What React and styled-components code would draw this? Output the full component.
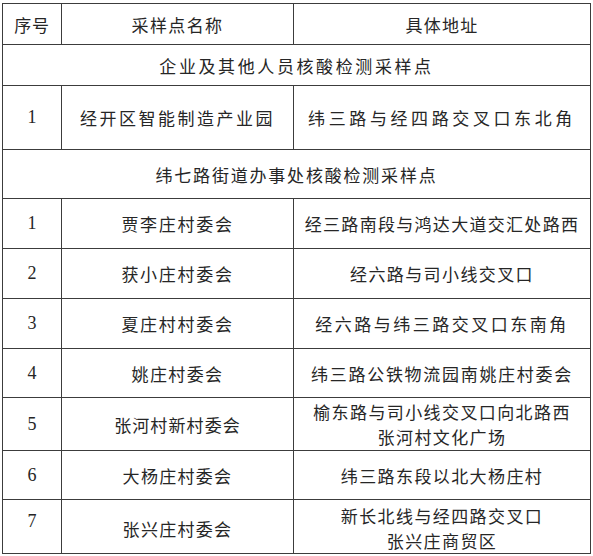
import React from 'react';
import styled, { createGlobalStyle } from 'styled-components';

const GlobalStyle = createGlobalStyle`
  html, body {
    margin: 0;
    padding: 0;
    background: #ffffff;
  }
  body {
    font-family: "Noto Sans CJK SC", "Liberation Serif", serif;
    color: #222;
  }
`;

const Page = styled.div`
  width: 593px;
  height: 556px;
  padding: 3px 0 0 2px;
  box-sizing: border-box;
  background: #fff;
  overflow: hidden;
`;

const Table = styled.table`
  width: 588px;
  border-collapse: collapse;
  table-layout: fixed;
  border: 1.5px solid #2e2e2e;
`;

const Row = styled.tr`
  height: ${({ h }) => h}px;
`;

const Cell = styled.td`
  border: 1.5px solid #3c3c3c;
  padding: ${({ pad }) => pad || '0'};
  text-align: center;
  vertical-align: middle;
  font-family: "Noto Sans CJK SC", serif;
  font-size: 17px;
  font-weight: 400;
  line-height: 25px;
  color: #262626;
  letter-spacing: ${({ sp }) => (sp != null ? sp : 1.4)}px;
  white-space: nowrap;
`;

const NumCell = styled(Cell)`
  font-family: "Liberation Serif", "Times New Roman", serif;
  font-size: 18px;
  letter-spacing: 0;
`;

const Line = styled.div`
  line-height: ${({ lh }) => lh || 25}px;
`;

const rows = [
  { type: 'section', text: '企业及其他人员核酸检测采样点', h: 41, sp: 2.6 },
  { type: 'item', no: '1', name: '经开区智能制造产业园', nameSp: 2.5, addr: ['纬三路与经四路交叉口东北角'], addrSp: 3.6, h: 64 },
  { type: 'section', text: '纬七路街道办事处核酸检测采样点', h: 49, sp: 1.8 },
  { type: 'item', no: '1', name: '贾李庄村委会', nameSp: 1.7, addr: ['经三路南段与鸿达大道交汇处路西'], addrSp: 1.3, h: 50 },
  { type: 'item', no: '2', name: '获小庄村委会', nameSp: 1.7, addr: ['经六路与司小线交叉口'], addrSp: 1.4, h: 50 },
  { type: 'item', no: '3', name: '夏庄村村委会', nameSp: 1.7, addr: ['经六路与纬三路交叉口东南角'], addrSp: 2.5, h: 50 },
  { type: 'item', no: '4', name: '姚庄村委会', nameSp: 1.4, addr: ['纬三路公铁物流园南姚庄村委会'], addrSp: 1.7, h: 49 },
  { type: 'item', no: '5', name: '张河村新村委会', nameSp: 1.1, addr: ['榆东路与司小线交叉口向北路西', '张河村文化广场'], addrSp: 1.4, h: 53, lh: 25 },
  { type: 'item', no: '6', name: '大杨庄村委会', nameSp: 1.3, addr: ['纬三路东段以北大杨庄村'], addrSp: 1.4, h: 49 },
  { type: 'item', no: '7', name: '张兴庄村委会', nameSp: 1.3, addr: ['新长北线与经四路交叉口', '张兴庄商贸区'], addrSp: 1.4, h: 54, lh: 25, last: true },
];

const App = () => {
  return (
    <Page>
      <GlobalStyle />
      <Table>
        <colgroup>
          <col style={{ width: 59 }} />
          <col style={{ width: 232 }} />
          <col style={{ width: 297 }} />
        </colgroup>
        <tbody>
          <Row h={41}>
            <Cell sp={0.8}>序号</Cell>
            <Cell sp={1.4}>采样点名称</Cell>
            <Cell sp={1.3}>具体地址</Cell>
          </Row>
          {rows.map((r, i) =>
            r.type === 'section' ? (
              <Row key={i} h={r.h}>
                <Cell colSpan={3} sp={r.sp}>{r.text}</Cell>
              </Row>
            ) : (
              <Row key={i} h={r.h}>
                <NumCell pad={r.last ? '0 0 10px 0' : '0'}>{r.no}</NumCell>
                <Cell sp={r.nameSp} pad={r.last ? '4px 0 0 0' : '0'}>{r.name}</Cell>
                <Cell sp={r.addrSp} pad={r.last ? '2px 0 0 0' : '0'}>
                  {r.addr.map((a) => (
                    <Line key={a} lh={r.lh}>{a}</Line>
                  ))}
                </Cell>
              </Row>
            )
          )}
        </tbody>
      </Table>
    </Page>
  );
};

export default App;
